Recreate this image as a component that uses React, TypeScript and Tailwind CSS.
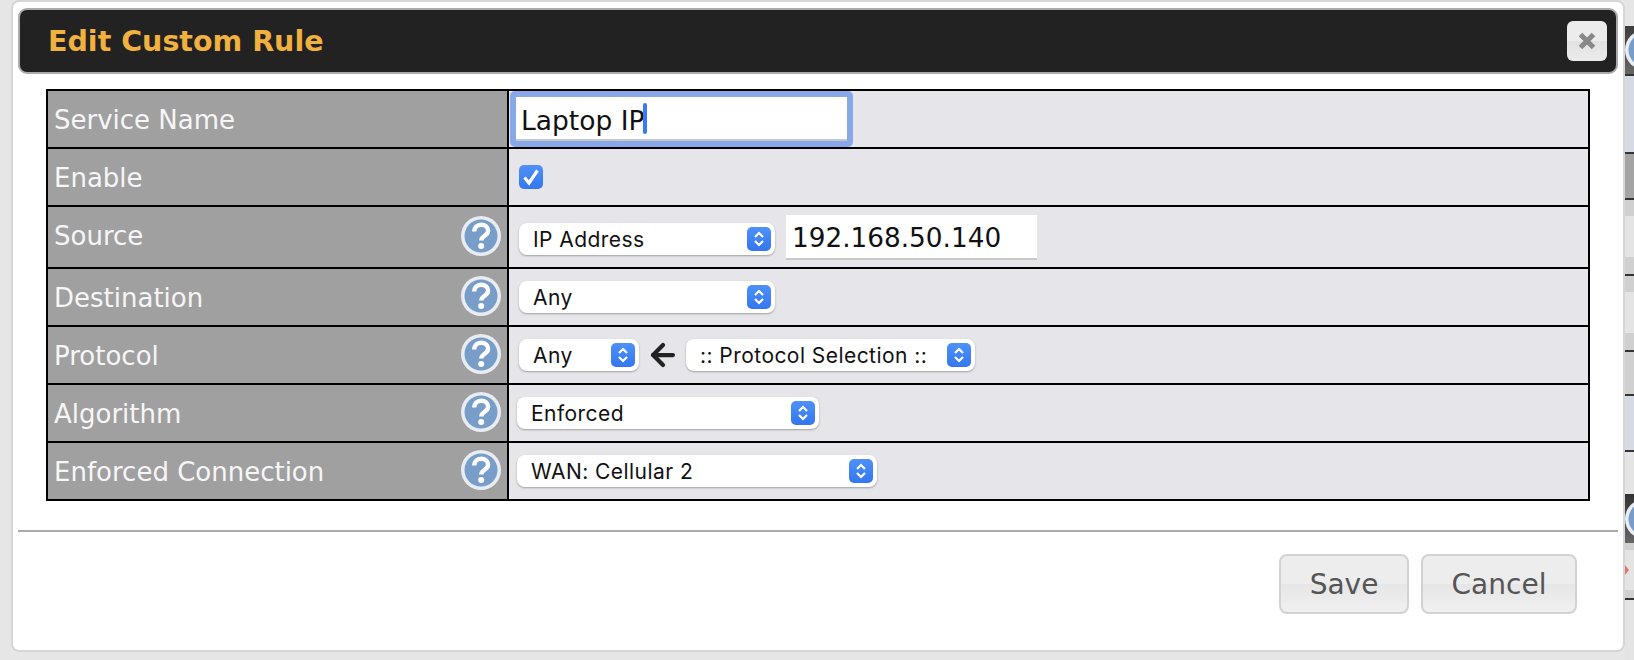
import React from "react";
import { ArrowLeft } from "lucide-react";

function HelpIcon() {
  return (
    <svg viewBox="0 0 40 40" className="w-[40px] h-[40px] shrink-0">
      <circle cx="20" cy="20" r="20" fill="#e9edf3" />
      <circle cx="20" cy="20" r="16.5" fill="#789dc9" />
      <path
        d="M13.2 15.6c0-4 3-6.8 7-6.8s6.9 2.4 6.9 5.8c0 2.6-1.5 4-3.5 5.2-2 1.2-3.3 2.2-3.3 4.6"
        fill="none"
        stroke="#fff"
        strokeWidth="4.4"
      />
      <circle cx="20.2" cy="30" r="3" fill="#fff" />
    </svg>
  );
}

function Stepper() {
  return (
    <span className="w-[24px] h-[24px] rounded-[5px] bg-linear-to-b from-[#4f91f8] to-[#3376ef] flex items-center justify-center shrink-0">
      <svg viewBox="0 0 24 24" className="w-[24px] h-[24px]" fill="none" stroke="#fff" strokeWidth="2.2">
        <path d="M8 10l4-4 4 4" />
        <path d="M8 14l4 4 4-4" />
      </svg>
    </span>
  );
}

function Select({ label, width }: { label: string; width: string }) {
  return (
    <div
      className={`${width} h-[32px] bg-white rounded-[8px] shadow-[0_1px_2px_rgba(0,0,0,0.3)] flex items-center justify-between pl-[14px] pr-[4px] text-[21px] tracking-[0.45px] text-[#111] font-['Inter',sans-serif]`}
    >
      <span className="whitespace-nowrap pt-[2px]">{label}</span>
      <Stepper />
    </div>
  );
}

function Row({
  label,
  help,
  tall,
  first,
  children,
}: {
  label: string;
  help?: boolean;
  tall?: boolean;
  first?: boolean;
  children: React.ReactNode;
}) {
  return (
    <div className={`flex ${tall ? "h-[62px]" : first ? "h-[56px]" : "h-[58px]"} ${first ? "" : "border-t-2 border-black"}`}>
      <div className="w-[461px] shrink-0 bg-[#a0a0a0] border-r-2 border-black flex items-center justify-between pl-[6px] pr-[6px] text-[26px] text-[#f6f6f6] pb-[2px]">
        <span className={tall ? "" : "pt-[5px]"}>{label}</span>
        {help && <HelpIcon />}
      </div>
      <div className="flex-1 bg-[#e5e5ea] flex items-center">{children}</div>
    </div>
  );
}

export default function App() {
  return (
    <div className="w-[1634px] h-[660px] overflow-hidden flex bg-[#e6e6e6] font-['DejaVu_Sans',sans-serif]">
      <div className="ml-[11px] w-[1614px] h-[652px] shrink-0 bg-white border-2 border-[#d6d6d6] rounded-[8px] pt-[6px] px-[5px] flex flex-col">
        {/* header */}
        <div className="h-[66px] bg-[#222] border-2 border-[#aaa] rounded-[9px] flex items-center justify-between pl-[28px] pr-[9px]">
          <h1 className="text-[28.5px] font-bold text-[#f1b13f] pt-[2px]">Edit Custom Rule</h1>
          <button className="w-[40px] h-[40px] rounded-[6px] bg-[linear-gradient(#ececec_50%,#e2e2e2_50%,#ececec)] flex items-center justify-center">
            <svg viewBox="0 0 20 20" className="w-[20px] h-[20px]" fill="none" stroke="#888" strokeWidth="5">
              <path d="M3.5 3.5l13 13M16.5 3.5l-13 13" />
            </svg>
          </button>
        </div>

        {/* form table */}
        <div className="mt-[15px] ml-[28px] w-[1544px] border-2 border-black">
          <Row label="Service Name" first>
            <div className="ml-[1px] w-[343px] h-[56px] border-[6px] border-[#89a8e9] rounded-[5px] bg-white">
              <div className="h-full border-b-2 border-[#c8c8c8] flex items-center pl-[5px] text-[26.5px] text-[#111]">
                <span className="whitespace-nowrap pt-[5px]">Laptop IP</span>
                <span className="w-[4px] h-[31px] rounded-[2px] bg-[#3b78f2] -ml-[1px]"></span>
              </div>
            </div>
          </Row>
          <Row label="Enable">
            <div className="ml-[10px] w-[24px] h-[24px] rounded-[5px] bg-linear-to-b from-[#4f91f8] to-[#3376ef] flex items-center justify-center">
              <svg viewBox="0 0 24 24" className="w-[24px] h-[24px]" fill="none" stroke="#fff" strokeWidth="3.2">
                <path d="M5.5 12.5l4.5 5.5L18.5 5.5" />
              </svg>
            </div>
          </Row>
          <Row label="Source" help tall>
            <div className="ml-[10px] flex items-center gap-[11px]">
              <div className="mt-[4px]">
                <Select label="IP Address" width="w-[256px]" />
              </div>
              <div className="w-[251px] h-[45px] bg-white border-b-2 border-[#c8c8c8] flex items-center pl-[6px] text-[26.3px] text-[#111]">
                <span className="pt-[5px]">192.168.50.140</span>
              </div>
            </div>
          </Row>
          <Row label="Destination" help>
            <div className="ml-[10px]">
              <Select label="Any" width="w-[256px]" />
            </div>
          </Row>
          <Row label="Protocol" help>
            <div className="ml-[10px] flex items-center">
              <Select label="Any" width="w-[120px]" />
              <ArrowLeft className="ml-[7px] mr-[6px] w-[34px] h-[34px] text-[#222]" strokeWidth={3} />
              <Select label=":: Protocol Selection ::" width="w-[289px]" />
            </div>
          </Row>
          <Row label="Algorithm" help>
            <div className="ml-[8px]">
              <Select label="Enforced" width="w-[302px]" />
            </div>
          </Row>
          <Row label="Enforced Connection" help>
            <div className="ml-[8px]">
              <Select label="WAN: Cellular 2" width="w-[360px]" />
            </div>
          </Row>
        </div>

        <div className="mt-[29px] h-[2px] bg-[#aaa] w-[1600px]"></div>

        {/* footer buttons */}
        <div className="mt-[22px] ml-[1261px] flex gap-[12px]">
          <button className="w-[130px] h-[60px] border-2 border-[#d2d2d2] rounded-[8px] bg-[linear-gradient(#ededed_50%,#e6e6e6_50%,#f0f0f0)] text-[28px] text-[#555] pt-[2px]">
            Save
          </button>
          <button className="w-[156px] h-[60px] border-2 border-[#d2d2d2] rounded-[8px] bg-[linear-gradient(#ededed_50%,#e6e6e6_50%,#f0f0f0)] text-[28px] text-[#555] pt-[2px]">
            Cancel
          </button>
        </div>
      </div>

      {/* page behind the dialog */}
      <div className="w-[9px] shrink-0 flex flex-col overflow-hidden">
        <div className="h-[26px] bg-[#e6e6e6]"></div>
        <div className="h-[50px] bg-linear-to-b from-[#3d3d3d] to-[#666] border-b-2 border-[#333] flex items-center"><HelpIcon /></div>
        <div className="h-[76px] bg-[#d5dae4]"></div>
        <div className="h-[46px] bg-[#a4a4a4] border-t-2 border-[#333]"></div>
        <div className="h-[18px] bg-[#d0d0d0] border-t-2 border-[#333]"></div>
        <div className="h-[41px] bg-[#e4e4e4]"></div>
        <div className="h-[17px] bg-[#d0d0d0]"></div>
        <div className="h-[18px] bg-[#d0d0d0] border-t-2 border-[#333]"></div>
        <div className="h-[41px] bg-[#e4e4e4]"></div>
        <div className="h-[17px] bg-[#d0d0d0]"></div>
        <div className="h-[46px] bg-[#d0d0d0] border-y-2 border-[#333]"></div>
        <div className="h-[56px] bg-[#d5dae4] border-b-2 border-[#333]"></div>
        <div className="h-[42px] bg-[#e4e4e4]"></div>
        <div className="h-[49px] bg-linear-to-b from-[#333] to-[#666] flex items-center"><HelpIcon /></div>
        <div className="h-[7px] bg-[#d0d0d0]"></div>
        <div className="h-[40px] bg-[#e4e4e4] flex items-center">
          <svg viewBox="0 0 4 10" className="w-[4px] h-[10px]"><path d="M0 0l4 5-4 5z" fill="#d97b6b" /></svg>
        </div>
        <div className="h-[8px] bg-[#d0d0d0]"></div>
        <div className="h-[62px] bg-[#e4e4e4] border-t-2 border-[#333]"></div>
      </div>
    </div>
  );
}
